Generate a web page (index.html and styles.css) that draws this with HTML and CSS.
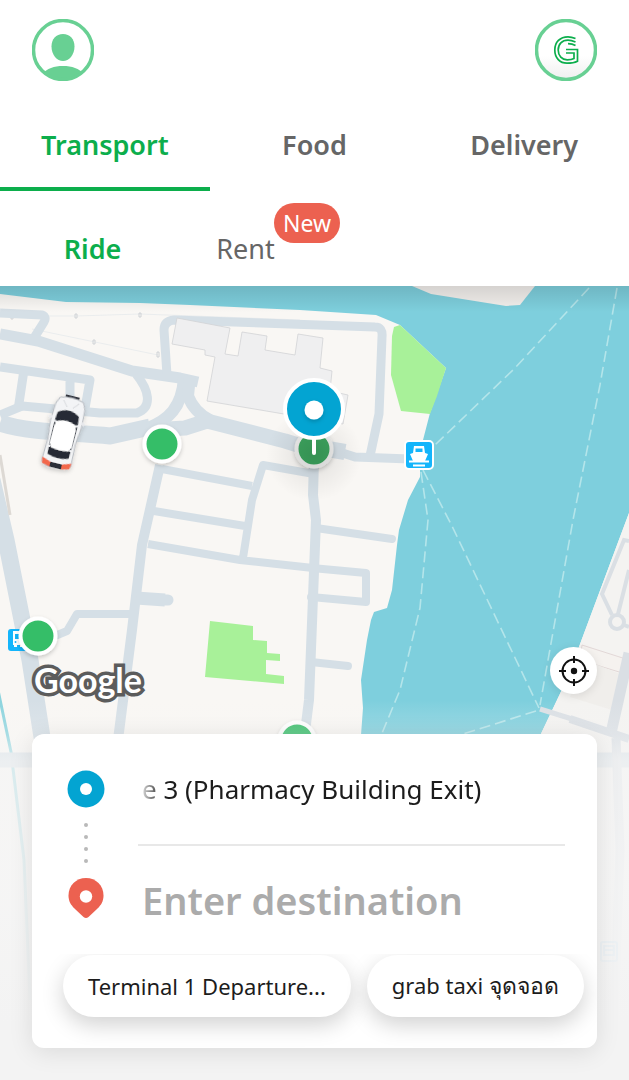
FILE: index.html
```html
<!DOCTYPE html>
<html lang="en">
<head>
    <meta charset="UTF-8">
    <meta name="viewport" content="width=device-width, initial-scale=1.0">
    <title>Transport</title>
    <link rel="stylesheet" href="styles.css">
</head>
<body>
    <header class="header">
        <div class="topbar">
            <button class="round-btn" aria-label="Profile">
                <svg viewBox="0 0 62 62">
                    <clipPath id="avatar"><circle cx="31" cy="31" r="30"/></clipPath>
                    <g fill="#68d093" clip-path="url(#avatar)">
                        <path d="M31 15c7 0 11.500 5 11.500 12.500C42.500 36 37 42 31 42s-11.500-6-11.500-14.500C19.500 20 24 15 31 15z"/>
                        <path d="M10 55c5-5.500 12-8 21-8s16 2.500 21 8v9H10z"/>
                    </g>
                    <circle cx="31" cy="31" r="29.500" fill="none" stroke="#68d093" stroke-width="3.500"/>
                </svg>
            </button>
            <button class="round-btn" aria-label="Grab">
                <svg viewBox="0 0 62 62">
                    <linearGradient id="shade" x1="0" y1="0" x2="0" y2="1">
                        <stop offset="0.600" stop-color="#fff"/>
                        <stop offset="1" stop-color="#efefef"/>
                    </linearGradient>
                    <circle cx="31" cy="31" r="29.500" fill="url(#shade)" stroke="#68d093" stroke-width="3.500"/>
                    <g fill="none" stroke="#0cae4c" stroke-width="1.700">
                        <path d="M40.500 19.500C37 18 35 17.800 33 17.800 25 17.800 19.800 23 19.800 31S25 44.200 32 44.200c4 0 8-.7 10.500-2V30.500H31"/>
                        <path d="M40.500 23C37 21.500 35 21.200 33 21.200c-6 0-9.800 4-9.800 9.800s3.800 9.800 9 9.800c2.500 0 5-.3 6.800-1.300V34H31"/>
                        <path d="M40.500 26.500C38 25 35.500 24.600 33 24.600"/>
                    </g>
                </svg>
            </button>
        </div>
        <nav class="tabs">
            <a href="#" class="tab active">Transport</a>
            <a href="#" class="tab">Food</a>
            <a href="#" class="tab">Delivery</a>
        </nav>
        <nav class="subtabs">
            <a href="#" class="subtab active">Ride</a>
            <a href="#" class="subtab">Rent<span class="badge">New</span></a>
        </nav>
    </header>

    <main class="map">
        <svg class="map-canvas" viewBox="0 286 629 794" preserveAspectRatio="xMidYMin slice" aria-hidden="true">
            <defs>
                <linearGradient id="fade" x1="0" y1="0" x2="0" y2="1">
                    <stop offset="0" stop-color="#f5f5f5" stop-opacity="0"/>
                    <stop offset="0.090" stop-color="#f5f5f5" stop-opacity="0.250"/>
                    <stop offset="0.160" stop-color="#f5f5f5" stop-opacity="0.720"/>
                    <stop offset="0.500" stop-color="#f5f5f5" stop-opacity="0.900"/>
                    <stop offset="0.850" stop-color="#f3f3f3" stop-opacity="1"/>
                </linearGradient>
                <linearGradient id="top-shadow" x1="0" y1="0" x2="0" y2="1">
                    <stop offset="0" stop-color="#000" stop-opacity="0.120"/>
                    <stop offset="1" stop-color="#000" stop-opacity="0"/>
                </linearGradient>
                <radialGradient id="pin-shadow">
                    <stop offset="0" stop-color="#000" stop-opacity="0.120"/>
                    <stop offset="0.500" stop-color="#000" stop-opacity="0.050"/>
                    <stop offset="1" stop-color="#000" stop-opacity="0"/>
                </radialGradient>
                <filter id="soft" x="-30%" y="-30%" width="160%" height="160%">
                    <feDropShadow dx="0" dy="2" stdDeviation="2" flood-opacity="0.200"/>
                </filter>
            </defs>

            <!-- land -->
            <rect y="286" width="629" height="794" fill="#f9f7f4"/>

            <!-- river -->
            <path fill="#7ecfdd" d="M0 286H629V513L617 545 589 620 567 679 538 740 500 840H360L361 735 363 708 361 680 367 640 371 620 374 612 387 608 392 590 397 545 399 530 408 500 420 477 420 465 423 440 430 413 446 368 400 325 376 315 300 310 190 305 140 303 66 302 0 294z"/>
            <path fill="#f2efec" d="M412 286 431 294 506 306 520 305 535 286z"/>
            <path fill="#f4f3f1" d="M629 513 617 545 589 620 567 679 538 740 520 800V1080H629z"/>
            <path d="M-2 690 11 752 24 860 30 1000" fill="none" stroke="#8cd4de" stroke-width="3"/>

            <!-- parks -->
            <path fill="#a8f199" d="M394 327 400 325 446 368 437 396 430 414 401 411 391 375 392 336z"/>
            <path fill="#a8f199" d="M210 621 253 626V640L267 641V653L280 654V661L266 660V674L284 676V684L205 677z"/>

            <g stroke="#e4e8eb" stroke-width="0.700" fill="none">
                <path d="M0 316 76 316 140 314 300 320M32 329 95 342 158 355"/>
            </g>
            <g fill="none" stroke="#c8ccd1" stroke-width="0.800">
                <path d="M75 314h2v4h-2zM139 313h2v4h-2zM93 340h2v4h-2zM157 352h2v5h-2zM11 316h2v3h-2z"/>
            </g>

            <!-- roads -->
            <g fill="none" stroke="#d5dfe6" stroke-width="9" stroke-linejoin="round">
                <path d="M0 313 42 315Q47 317 44 322L34 338"/>
                <path d="M0 334 38 341 132 371 180 378 198 382" stroke-width="11"/>
                <path d="M167 375 164 330Q164 321 174 320L375 327Q383 327 382 337L379 414 370 456"/>
                <path d="M0 367 90 380 84 414M24 370 18 410M70 378V410"/>
                <path d="M0 415 22 406 100 413 137 413C153 407 149 390 136 374"/>
                <path d="M0 423C30 433 70 432 110 436L150 427" stroke-width="17"/>
                <path d="M148 428C168 420 182 408 184 378" stroke-width="12"/>
                <path d="M190 376 188 396Q194 412 210 420" stroke-width="12"/>
                <path d="M150 430 185 428 207 421 285 441 314 450" stroke-width="15"/>
                <path d="M330 449 355 457 410 459" stroke-width="9"/>
                <path d="M322 448 345 452" stroke-width="16"/>
                <path d="M160 465 142 545 132 630 118 740" stroke-width="10"/>
                <path d="M162 469 252 486M154 511 245 526M148 544 240 560 313 568M243 558 252 500 263 465 314 474" stroke-width="8"/>
                <path d="M314 460 313 495 316 520 309 700 304 740" stroke-width="10"/>
                <path d="M316 528 392 539M312 568 366 573V602L311 597M311 662 348 666" stroke-width="8" stroke-linecap="round"/>
                <path d="M136 598 165 600" stroke-width="13"/>
                <path d="M160 600h8" stroke-width="11" stroke-linecap="round"/>
                <path d="M55 636 67 631 77 614 132 614" stroke-width="8"/>
                <path d="M-8 480 6 540 30 660 44 750 60 900" stroke-width="17"/>
                <path d="M0 760H629" stroke-width="15"/>
                <path d="M117 750 110 900" stroke-width="12"/>
            </g>
            <path d="M0 455 10 515" fill="none" stroke="#ddd9d4" stroke-width="3"/>

            <!-- buildings -->
            <g fill="#efeff0" stroke="#d2d3d6" stroke-width="0.800">
                <path d="M177 318 230 328 225 354 238 356 242 332 267 336 265 350 295 355 298 334 323 338 320 368 332 371 330 391 348 395 343 424 207 401 215 357 205 355V350L172 344z"/>
                <path d="M582 645 629 660V675L580 660z" fill="#f5f2ef" stroke="#ddd0d0"/>
            </g>
            <path d="M585 660 620 674 612 710 570 697z" fill="#f0eeeb"/>

            <!-- east bank -->
            <g fill="none" stroke="#dadfe4" stroke-width="4">
                <path d="M629 541 624 540 602 594 612 615M629 570 618 614"/>
                <circle cx="617" cy="622" r="7"/>
                <path d="M624 625 629 627"/>
                <path d="M540 709 572 719" stroke-width="5"/>
                <path d="M570 719 629 739" stroke-width="8"/>
                <path d="M629 653 611 733" stroke-width="11"/>
                <path d="M616 738 620 850 612 1080" stroke-width="9"/>
            </g>

            <!-- ferry lines -->
            <g fill="none" stroke="#b4e5ea" stroke-width="1.600" stroke-dasharray="11 5">
                <path d="M589 288 515 368 435 445"/>
                <path d="M617 288 600 385 573 520 540 705"/>
                <path d="M423 470 452 526 539 708"/>
                <path d="M421 472 428 520 420 608 400 690 380 738"/>
                <path d="M536 711 460 735"/>
            </g>

            <!-- transit icons -->
            <g>
                <rect x="405" y="441" width="28" height="28" rx="4" fill="#14b5fb" stroke="#fff" stroke-width="2"/>
                <path d="M414 446h10l1 7 3 1-3 7h-12l-3-7 3-1z" fill="#fff"/>
                <path d="M415.500 448.500h7v3.500h-7z" fill="#14b5fb"/>
                <path d="M409 461.500h20M413 465.500h12" stroke="#fff" stroke-width="1.800"/>
            </g>
            <g>
                <rect x="8" y="629" width="22" height="22" rx="3" fill="#14b5fb"/>
                <path d="M13 631h12v14h-2v2h-3v-2h-3v2h-3v-2h-1v-14z" fill="#fff"/>
                <path d="M15 634h9v5h-9z" fill="#14b5fb"/>
                <circle cx="15.500" cy="642" r="1" fill="#14b5fb"/>
            </g>
            <g fill="none" stroke="#6dbcf0" stroke-width="2">
                <rect x="601" y="942" width="16" height="19" rx="2"/>
                <path d="M604 946h10v9h-10zM604 950h10"/>
            </g>

            <!-- pickup spots -->
            <g fill="#34be67" stroke="#fff" stroke-width="4">
                <circle cx="162" cy="444" r="17.500" filter="url(#soft)"/>
                <circle cx="38" cy="636" r="17.500" filter="url(#soft)"/>
                <circle cx="297" cy="740" r="17.500" filter="url(#soft)"/>
                <circle cx="314" cy="449" r="17.500" fill="#3da55f" stroke="#eeeeed" filter="url(#soft)"/>
            </g>

            <rect y="700" width="629" height="380" fill="url(#fade)"/>
            <rect y="286" width="629" height="26" fill="url(#top-shadow)"/>

            <!-- car -->
            <g transform="translate(64 432) rotate(14)" filter="url(#soft)">
                <path d="M-7-37H7V-32H-7z" fill="#30343d"/>
                <path d="M-12-33Q0-37 12-33L15-26 16-8 14 10 15 32Q14 36 0 37T-15 32L-14 10-16-8-15-26z" fill="#f3f4f6" stroke="#b5b9bf"/>
                <path d="M-11-18Q0-26 11-18L12-8 11 25Q0 29-11 25L-12-8z" fill="#252b36"/>
                <path d="M-10-9Q0-14 10-9L11-4V14L9 18Q0 20-9 18L-11 14V-4z" fill="#fff"/>
                <path d="M-12-9-10-8M12-9 10-8M-12 17-10 17M12 17 10 17" stroke="#f3f4f6" stroke-width="2"/>
                <path d="M-8-31-3-25M8-31 3-25" stroke="#d3d5d9"/>
                <path d="M-15 29-6 32V37L-14 35zM15 29 6 32V37L14 35z" fill="#f2674b"/>
                <path d="M-6 32H6V37H-6z" fill="#2b2f38"/>
                <path d="M-18-11-15-13M18-11 15-13" stroke="#e8e9ec" stroke-width="3"/>
            </g>

            <!-- current pickup pin -->
            <ellipse cx="314" cy="455" rx="48" ry="46" fill="url(#pin-shadow)"/>
            <path d="M314 436V453" stroke="#fff" stroke-width="4" stroke-linecap="round"/>
            <circle cx="314" cy="409" r="29" fill="#03a4d2" stroke="#fff" stroke-width="4"/>
            <circle cx="314" cy="410" r="9.500" fill="#fff" filter="url(#soft)"/>
        </svg>

        <div class="map-controls">
            <span class="map-logo">Google</span>
            <button class="locate-btn" aria-label="My location">
                <svg viewBox="0 0 30 30" fill="none" stroke="#111" stroke-width="2">
                    <circle cx="15" cy="15" r="11.500"/>
                    <circle cx="15" cy="15" r="3.200" fill="#111" stroke="none"/>
                    <path d="M15 0v7M15 23v7M0 15h7M23 15h7"/>
                </svg>
            </button>
        </div>

        <form class="card">
            <div class="route">
                <div class="route-icons">
                    <svg width="38" height="38" viewBox="0 0 38 38">
                        <circle cx="19" cy="19" r="18.500" fill="#03a4d2"/>
                        <circle cx="19" cy="19" r="6" fill="#fff"/>
                    </svg>
                    <svg width="6" height="42" viewBox="0 0 6 42" fill="#b9b9b9">
                        <circle cx="3" cy="3" r="2"/>
                        <circle cx="3" cy="15" r="2"/>
                        <circle cx="3" cy="27" r="2"/>
                        <circle cx="3" cy="39" r="2"/>
                    </svg>
                    <svg width="36" height="40" viewBox="0 0 36 40">
                        <path d="M18 0C28 0 35.500 7.500 35.500 17.500c0 6-2.500 9.500-6 13L20.500 39q-2.500 2-5 0L6.500 30.500c-3.500-3.500-6-7-6-13C.5 7.500 8 0 18 0z" fill="#ec6150"/>
                        <circle cx="18" cy="18.500" r="6.200" fill="#fff"/>
                    </svg>
                </div>
                <div class="route-fields">
                    <input class="pickup" type="text" value="e 3 (Pharmacy Building Exit)" aria-label="Pickup" readonly>
                    <input class="destination" type="text" placeholder="Enter destination" aria-label="Destination">
                </div>
            </div>
            <div class="chips">
                <button type="button" class="chip">Terminal 1 Departure...</button>
                <button type="button" class="chip">grab taxi <span lang="th">จุดจอด</span></button>
            </div>
        </form>
    </main>
</body>
</html>
```
FILE: styles.css
```css
* {
    margin: 0;
    padding: 0;
    box-sizing: border-box;
    font-family: "Noto Sans", "Open Sans", sans-serif;
}
body {
    display: flex;
    flex-direction: column;
    min-height: 100vh;
    background: #f5f5f5;
}
a {
    text-decoration: none;
    color: #666;
}
button, input {
    border: none;
    background: none;
}
button {
    cursor: pointer;
}
svg {
    display: block;
}

/* Header */
.header {
    background: #fff;
}
.topbar {
    display: flex;
    justify-content: space-between;
    padding: 19px 32px;
}
.round-btn {
    width: 62px;
    height: 62px;
    border-radius: 50%;
}
.tabs {
    display: grid;
    grid-template-columns: repeat(3, 1fr);
}
.tab {
    padding: 27px 0 24px;
    border-bottom: 4px solid transparent;
    font-size: 27px;
    line-height: 36px;
    font-weight: 600;
    text-align: center;
}
.tab.active {
    color: #0cae4c;
    border-color: #0cae4c;
}
.subtabs {
    display: flex;
    padding: 40px 16px 19px;
}
.subtab {
    position: relative;
    width: 153px;
    font-size: 27px;
    line-height: 36px;
    text-align: center;
}
.subtab.active {
    color: #0cae4c;
    font-weight: 600;
}
.badge {
    position: absolute;
    left: 105px;
    bottom: 24px;
    padding: 2px 9px;
    border-radius: 20px;
    background: #ec6150;
    color: #fff;
    font-size: 23px;
}

/* Map */
.map {
    position: relative;
    flex: 1;
    display: flex;
    flex-direction: column;
    justify-content: flex-end;
    min-height: 794px;
    padding: 0 32px 32px;
    overflow: hidden;
}
.map-canvas {
    position: absolute;
    top: 0;
    left: 0;
    width: 100%;
    height: 100%;
}
.map-controls {
    position: relative;
    display: flex;
    justify-content: space-between;
    align-items: flex-end;
    margin-bottom: 40px;
}
.map-logo {
    padding-left: 2px;
    font-family: Lato, sans-serif;
    font-size: 34px;
    line-height: 28px;
    font-weight: 700;
    color: #fff;
    -webkit-text-stroke: 7px #5c5c5c;
    paint-order: stroke fill;
}
.locate-btn {
    display: flex;
    align-items: center;
    justify-content: center;
    width: 47px;
    height: 47px;
    border-radius: 50%;
    background: #fff;
    box-shadow: 0 2px 10px rgba(0, 0, 0, 0.1);
}
.locate-btn svg {
    width: 30px;
    height: 30px;
}

/* Booking card */
.card {
    position: relative;
    border-radius: 12px;
    background: #fff;
    box-shadow: 0 4px 24px rgba(0, 0, 0, 0.1);
    overflow: hidden;
}
.route {
    display: flex;
    gap: 30px;
    padding: 0 32px;
}
.route-icons {
    display: flex;
    flex-direction: column;
    align-items: center;
    gap: 14px;
    width: 44px;
    padding-top: 36px;
}
.route-fields {
    flex: 1;
    min-width: 0;
}
.route-fields input {
    display: block;
    width: 100%;
    height: 110px;
    padding: 0 4px;
    outline: none;
}
.route-fields .pickup {
    color: #1c1c1c;
    font-size: 26px;
    /* long addresses scroll, so the left edge fades out */
    -webkit-mask-image: linear-gradient(to right, transparent, #000 24px);
    mask-image: linear-gradient(to right, transparent, #000 24px);
}
.route-fields .destination {
    border-top: 2px solid #e8e8e8;
    font-size: 38px;
    font-weight: 600;
}
.destination::placeholder {
    color: #ababab;
}
.chips {
    display: flex;
    gap: 16px;
    padding: 1px 12px 31px 31px;
    overflow: hidden;
}
.chip {
    height: 62px;
    padding: 0 25px;
    border-radius: 31px;
    background: #fff;
    box-shadow: 0 8px 22px rgba(0, 0, 0, 0.18);
    color: #1c1c1c;
    font-size: 22px;
    white-space: nowrap;
}
.chip span {
    font-size: 23px;
}
```
